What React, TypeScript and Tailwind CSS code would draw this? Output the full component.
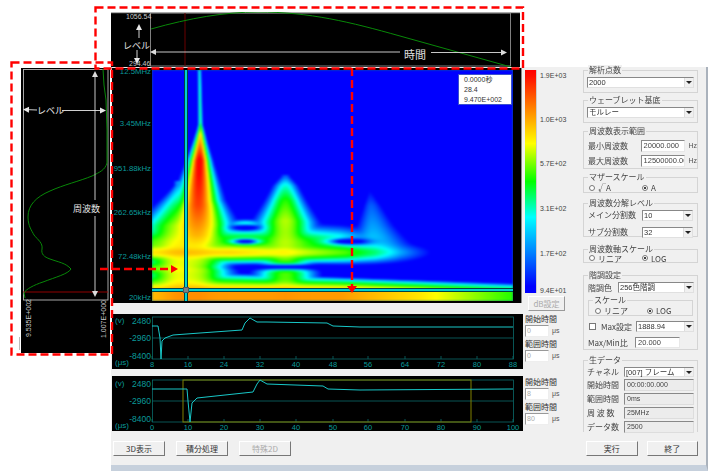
import React, { useEffect, useRef } from "react";

type P = [number, number];
const tb = (t: number, pts: P[]) => {
  if (t <= pts[0][0]) return pts[0][1];
  for (let i = 1; i < pts.length; i++) {
    if (t <= pts[i][0]) {
      const [a, b] = pts[i - 1];
      const [c, d] = pts[i];
      return b + ((d - b) * (t - a)) / (c - a);
    }
  }
  return pts[pts.length - 1][1];
};

const field = (x: number, y: number) => {
  const g = (d: number, s: number) => Math.exp(-(d * d) / (s * s));
  const parts: number[] = [];
  parts.push(
    tb(y, [[70, 0.36], [122, 0.42], [135, 0.72], [160, 1.04], [205, 0.92], [235, 0.76], [250, 0.6]]) *
      g(x - tb(y, [[70, 199], [130, 200], [225, 197]]), tb(y, [[70, 2], [125, 2.5], [140, 5.5], [165, 11], [200, 20], [225, 32], [240, 34]]))
  );
  if (y > 180) {
    parts.push(tb(y, [[185, 0.25], [205, 0.45], [225, 0.6], [245, 0.65]]) * g(x - 178, tb(y, [[185, 6], [225, 38]])));
  }
  if (y > 174) {
    parts.push(
      tb(y, [[176, 0.2], [185, 0.36], [200, 0.52], [220, 0.62], [235, 0.6], [250, 0.55]]) *
        g(x - 285, tb(y, [[176, 7], [185, 13], [200, 18], [222, 28], [240, 30]]))
    );
  }
  if (y > 186 && y < 268) {
    const cx = tb(y, [[187, 369], [262, 375]]);
    const s = tb(y, [[187, 3], [225, 18], [262, 38]]) * (x > cx ? 1.4 : 1);
    parts.push(tb(y, [[187, 0.1], [205, 0.2], [230, 0.27], [252, 0.33], [262, 0.15], [268, 0]]) * g(x - cx, s));
  }
  parts.push(tb(x, [[152, 0.7], [230, 0.72], [300, 0.64], [345, 0.55], [375, 0.42], [400, 0.25], [430, 0.12], [450, 0]]) * g(y - 252, 11));
  parts.push(tb(x, [[152, 0.55], [300, 0.55], [340, 0.42], [380, 0.18], [410, 0]]) * g(y - 243, 17));
  parts.push(tb(x, [[152, 0.56], [205, 0.5], [225, 0.25], [240, 0]]) * g(y - 268, 9));
  parts.push(0.42 * g(x - 245, 20) * g(y - 224, 5));
  const top = 270 + ((x - 152) / 361) * 13;
  if (y > top) {
    const t = Math.min(1, (y - top) / (290 - top));
    const vm = tb(x, [[152, 0.76], [200, 0.8], [340, 0.8], [420, 0.7], [513, 0.52]]);
    parts.push(0.1 + (vm - 0.1) * Math.pow(t, 0.7));
  }
  let sum = 0;
  for (const p of parts) sum += Math.pow(p, 7);
  let v = Math.pow(sum, 1 / 7);
  const hole = (hx: number, hy: number, wx: number, wy: number, d: number) => {
    v *= 1 - d * g(x - hx, wx) * g(y - hy, wy);
  };
  hole(245, 227, 13, 3, 0.95);
  hole(245, 241, 14, 2.6, 0.95);
  hole(348, 241, 20, 3, 0.95);
  hole(285, 266.5, 50, 3, 0.9);
  return v;
};

const jet = (v: number): [number, number, number] => {
  const s: P[] = [[0.12, 0], [0.34, 0], [0.5, 0], [0.67, 255], [1, 255]];
  const c: P[] = [[0.12, 0], [0.34, 255], [0.67, 255], [1, 0]];
  const b: P[] = [[0.12, 255], [0.34, 255], [0.5, 0], [1, 0]];
  return [tb(v, s), tb(v, c), tb(v, b)];
};

function Heat() {
  const ref = useRef<HTMLCanvasElement>(null);
  useEffect(() => {
    const cv = ref.current;
    if (!cv) return;
    const ctx = cv.getContext("2d");
    if (!ctx) return;
    const im = ctx.createImageData(cv.width, cv.height);
    for (let j = 0; j < cv.height; j++) {
      for (let i = 0; i < cv.width; i++) {
        const [r, g, b] = jet(field(152 + i, 70 + j));
        const k = (j * cv.width + i) * 4;
        im.data[k] = r;
        im.data[k + 1] = g;
        im.data[k + 2] = b;
        im.data[k + 3] = 255;
      }
    }
    ctx.putImageData(im, 0, 0);
  }, []);
  return (
    <div className="w-[361px] h-[231px] overflow-hidden bg-[#0a6a8a]">
      <canvas ref={ref} width={361} height={231} className="block w-[361px] h-[231px] bg-[#0000ff] blur-[1px]" />
    </div>
  );
}

const LATIN = "'Liberation Sans', 'Noto Sans CJK JP', sans-serif";
const JP = "'Noto Sans CJK JP', sans-serif";
const TEAL = "#0a9a9a";

function Arrow({ x1, y1, x2, y2, color = "#e8e8e8" }: { x1: number; y1: number; x2: number; y2: number; color?: string }) {
  const a = Math.atan2(y2 - y1, x2 - x1);
  const L = 6;
  const W = 3;
  const bx = x2 - L * Math.cos(a);
  const by = y2 - L * Math.sin(a);
  const nx = -Math.sin(a) * W;
  const ny = Math.cos(a) * W;
  return (
    <g>
      <line x1={x1} y1={y1} x2={bx} y2={by} stroke={color} strokeWidth={0.9} />
      <polygon points={`${x2},${y2} ${bx + nx},${by + ny} ${bx - nx},${by - ny}`} fill={color} />
    </g>
  );
}

function TopPanel() {
  return (
    <div className="w-[409px] h-[55px] bg-black">
      <svg viewBox="111 12 409 55" className="block w-[409px] h-[55px]">
        <rect x="111" y="12" width="409" height="1.2" fill="#b0b0b0" />
        <rect x="150.5" y="13" width="360" height="53" fill="none" stroke="#a0a0a0" strokeWidth="0.8" />
        <line x1="185" y1="13" x2="185" y2="66" stroke="#6a0000" strokeWidth="1" />
        <path d="M151 29 C190 18 225 12 258 12 C310 12 350 22 400 36 L511 67" fill="none" stroke="#088808" strokeWidth="1" />
        <text x="126" y="18.5" fontSize="7" fill="#c8c8c8" fontFamily={LATIN}>1056.54</text>
        <text x="129" y="65.5" fontSize="7" fill="#c8c8c8" fontFamily={LATIN}>294.46</text>
        <text x="123" y="49" fontSize="9" fill="#e0e0e0" fontFamily={JP}>レベル</text>
        <Arrow x1={139} y1={38} x2={139} y2={24} />
        <Arrow x1={137} y1={50} x2={137} y2={64} />
        <Arrow x1={400} y1={52} x2={150} y2={52} color="#dcdcdc" />
        <Arrow x1={431} y1={52.5} x2={507} y2={52.5} color="#dcdcdc" />
        <text x="404" y="59" fontSize="11" fill="#e0e0e0" fontFamily={JP}>時間</text>
      </svg>
    </div>
  );
}

function LeftPanel() {
  return (
    <div className="w-[91px] h-[285px] bg-black border-r-2 border-white">
      <svg viewBox="21 68 89 285" className="block w-[89px] h-[285px]">
        <rect x="23.5" y="69.5" width="84.5" height="230.5" fill="none" stroke="#b8b8b8" strokeWidth="0.9" />
        <line x1="23" y1="292" x2="108" y2="292" stroke="#a00000" strokeWidth="0.9" />
        <path
          d="M103 69 L104 85 L106 100 L107 130 L107 163 C105 170 100 172 92 176 C80 181 63 185 50 191 C36 197 28 205 28 217 C28 226 32 231 34 235 C38 240 43 243 42 249 C41 254 44 257 50 259 C58 262 66 263 71 269 C68 274 56 277 43 282 C34 285 26 289 24 293 L25 298"
          fill="none"
          stroke="#088808"
          strokeWidth="1"
        />
        <Arrow x1={95} y1={200} x2={95} y2={71} color="#dcdcdc" />
        <Arrow x1={95} y1={216} x2={95} y2={297} color="#dcdcdc" />
        <rect x="70" y="200" width="33" height="16" fill="#000" />
        <text x="73" y="212" fontSize="9" fill="#e8e8e8" fontFamily={JP}>周波数</text>
        <Arrow x1={37} y1={110} x2={23} y2={109.5} />
        <Arrow x1={62} y1={110.5} x2={106} y2={110.5} />
        <text x="37" y="114" fontSize="9" fill="#e8e8e8" fontFamily={JP}>レベル</text>
        <text transform="translate(31 337) rotate(-90)" fontSize="7" fill="#c8c8c8" fontFamily={LATIN}>9.535E+002</text>
        <text transform="translate(106 338) rotate(-90)" fontSize="7" fill="#c8c8c8" fontFamily={LATIN}>1.007E+000</text>
      </svg>
    </div>
  );
}

function Spectrogram() {
  const labels: [string, number][] = [
    ["12.5MHz", 74],
    ["3.45MHz", 125.5],
    ["951.88kHz", 170.5],
    ["262.65kHz", 215],
    ["72.48kHz", 259],
    ["20kHz", 300],
  ];
  return (
    <div className="relative flex w-[410px] h-[235px] bg-black border-r border-[#888]">
      <svg viewBox="112 68 40 235" className="block w-[40px] h-[235px] shrink-0">
        {labels.map(([t, y]) => (
          <text key={t} x="151" y={y} textAnchor="end" fontSize="7.8" fill={TEAL} fontFamily={LATIN}>
            {t}
          </text>
        ))}
      </svg>
      <div className="relative w-[361px] h-[231px] mt-[2px] border-0">
        <Heat />
        <div className="absolute left-[32px] top-0 w-[4px] h-[231px] bg-[#00d0d0] border-x border-[#044]" />
        <div className="absolute left-0 top-[218px] w-[361px] h-[4px] bg-[#00d0d0] border-y border-[#044]" />
        <div className="absolute left-[31px] top-[217px] w-[6px] h-[6px] bg-[#808080] border border-[#555]" />
        <div
          className="absolute left-[306px] top-[4px] w-[54px] h-[31px] bg-white border border-[#3a50d0] pl-[5px] text-[7px] leading-[10px] text-[#333]"
          style={{ fontFamily: LATIN }}
        >
          <div>0.0000秒</div>
          <div>28.4</div>
          <div>9.470E+002</div>
        </div>
      </div>
    </div>
  );
}

function ColorBar() {
  const ticks: [string, string][] = [
    ["1.9E+03", "mt-0"],
    ["1.0E+03", "mt-[34px]"],
    ["5.7E+02", "mt-[34px]"],
    ["3.1E+02", "mt-[35px]"],
    ["1.7E+02", "mt-[35px]"],
    ["9.4E+01", "mt-[27px]"],
  ];
  return (
    <div className="flex flex-col w-[47px] ml-[3px]">
      <div className="flex h-[223px] mt-[2px]">
        <div className="w-[12px] h-[223px] border-r border-[#ccc] bg-[linear-gradient(to_bottom,#ff0000_0%,#ff1000_3%,#ff8000_17%,#ffff00_33%,#00ff00_50%,#00ffff_66%,#0080ff_82%,#0000ff_97%)]" />
        <div className="ml-[3px] pt-[1px] flex flex-col text-[7px] leading-[10px] text-[#444]" style={{ fontFamily: LATIN }}>
          {ticks.map(([t, m]) => (
            <div key={t} className={m}>{t}</div>
          ))}
        </div>
      </div>
      <button className="mt-[3px] ml-[3px] w-[37px] h-[15px] shrink-0 bg-[#f0f0f0] border border-t-white border-l-white border-r-[#999] border-b-[#999] text-[8px] leading-[12px] text-[#aaa]" style={{ fontFamily: JP }}>
        dB設定
      </button>
    </div>
  );
}

function Wave({ ticks, pts, mid, box, rect }: { ticks: [string, number][]; pts: string; mid: number; box: [number, number]; rect?: boolean }) {
  const y0 = box[0] - 3 - (rect ? 1 : 0);
  return (
    <div className="w-[411px] h-[55px] bg-black">
      <svg viewBox={`112 ${y0} 411 55`} className="block w-[411px] h-[55px]">
        <rect x="152.5" y={box[0]} width="361" height={box[1] - box[0]} fill="none" stroke="#0a6a6a" strokeWidth="0.8" />
        <line x1="152" y1={mid} x2="513" y2={mid} stroke="#0a6a6a" strokeWidth="0.8" />
        {ticks.map(([t, x]) => (
          <g key={t}>
            <line x1={x} y1={box[1] - 3} x2={x} y2={box[1]} stroke="#0a6a6a" strokeWidth="0.8" />
            <text x={x} y={box[1] + 8} textAnchor="middle" fontSize="7.5" fill={TEAL} fontFamily={LATIN}>{t}</text>
          </g>
        ))}
        <text x="115" y={box[0] + 6} fontSize="8" fill={TEAL} fontFamily={LATIN}>(v)</text>
        <text x="115" y={box[1] + 6} fontSize="8" fill={TEAL} fontFamily={LATIN}>(μs)</text>
        <text x="151" y={box[0] + 7} textAnchor="end" fontSize="8.5" fill={TEAL} fontFamily={LATIN}>2480</text>
        <text x="151" y={mid + 3} textAnchor="end" fontSize="8.5" fill={TEAL} fontFamily={LATIN}>-2960</text>
        <text x="151" y={box[1] - 0.5} textAnchor="end" fontSize="8.5" fill={TEAL} fontFamily={LATIN}>-8400</text>
        {rect && <rect x="183" y={box[0]} width="288" height={box[1] - box[0]} fill="none" stroke="#808000" strokeWidth="1" />}
        <polyline points={pts} fill="none" stroke="#18c8c8" strokeWidth="1" />
      </svg>
    </div>
  );
}

function SmallInput({ v }: { v: string }) {
  return (
    <div className="w-[24px] h-[12px] bg-white border border-t-[#999] border-l-[#999] border-r-[#eee] border-b-[#eee] pl-[1px] text-[7px] leading-[10px] text-[#aaa]" style={{ fontFamily: LATIN }}>
      {v}
    </div>
  );
}

function Side({ a, b, cls = "" }: { a: string; b: string; cls?: string }) {
  const Row = ({ t, v }: { t: string; v: string }) => (
    <div>
      <div className="text-[8px] leading-[10px] text-[#333]" style={{ fontFamily: JP }}>{t}</div>
      <div className="flex items-center mt-[1px]">
        <SmallInput v={v} />
        <span className="ml-[3px] text-[7px] text-[#555]" style={{ fontFamily: LATIN }}>μs</span>
      </div>
    </div>
  );
  return (
    <div className={`ml-[2px] flex flex-col gap-[2px] w-[44px] ${cls}`}>
      <Row t="開始時間" v={a} />
      <Row t="範囲時間" v={b} />
    </div>
  );
}

function Btn({ t, cls, off }: { t: string; cls: string; off?: boolean }) {
  return (
    <button
      className={`h-[15px] bg-[#f0f0f0] border border-t-white border-l-white border-r-[#777] border-b-[#777] text-[8px] leading-[12px] ${off ? "text-[#aaa]" : "text-[#333]"} ${cls}`}
      style={{ fontFamily: JP }}
    >
      {t}
    </button>
  );
}

function Group({ title, cls, children }: { title: string; cls: string; children?: React.ReactNode }) {
  return (
    <div className={`relative border border-[#d4d4d4] ${cls}`}>
      <span className="absolute left-[4px] top-[-6px] bg-[#f0f0f0] px-[1px] text-[8px] leading-[10px] text-[#444] whitespace-nowrap" style={{ fontFamily: JP }}>
        {title}
      </span>
      {children}
    </div>
  );
}

function Select({ v, cls }: { v: string; cls: string }) {
  return (
    <div className={`flex items-center justify-between bg-white border border-t-[#888] border-l-[#888] border-r-[#e0e0e0] border-b-[#e0e0e0] ${cls}`}>
      <span className="pl-[1px] text-[7.5px] leading-[9px] text-[#333] whitespace-nowrap overflow-hidden" style={{ fontFamily: LATIN }}>{v}</span>
      <span className="w-[9px] h-full bg-[#f0f0f0] flex items-center justify-center shrink-0 border-l border-[#ddd]">
        <span className="w-0 h-0 border-x-[3px] border-x-transparent border-t-[3px] border-t-[#222]" />
      </span>
    </div>
  );
}

function Field({ v, cls }: { v: string; cls: string }) {
  return (
    <div className={`bg-white border border-t-[#888] border-l-[#888] border-r-[#e8e8e8] border-b-[#e8e8e8] pl-[2px] text-[7.5px] leading-[10px] text-[#444] overflow-hidden whitespace-nowrap ${cls}`} style={{ fontFamily: LATIN }}>
      {v}
    </div>
  );
}

function Radio({ on, t, cls }: { on?: boolean; t: string; cls: string }) {
  return (
    <div className={`flex items-center gap-[3px] ${cls}`}>
      <span className="w-[6px] h-[6px] rounded-full border border-[#777] bg-white flex items-center justify-center">
        {on && <span className="w-[2px] h-[2px] rounded-full bg-black" />}
      </span>
      <span className="text-[8px] leading-[9px] text-[#444] whitespace-nowrap" style={{ fontFamily: JP }}>{t}</span>
    </div>
  );
}

function Lab({ t, cls = "" }: { t: string; cls?: string }) {
  return <span className={`text-[8px] leading-[10px] text-[#444] whitespace-nowrap ${cls}`} style={{ fontFamily: JP }}>{t}</span>;
}

function Controls() {
  return (
    <div className="w-[115px] ml-[1px] pt-[3px] flex flex-col">
      <Group title="解析点数" cls="h-[23px] pt-[6px] px-[3px]">
        <Select v="2000" cls="w-[107px] h-[11px]" />
      </Group>
      <Group title="ウェーブレット基底" cls="h-[23px] mt-[7px] pt-[6px] px-[3px]">
        <Select v="モルレー" cls="w-[107px] h-[11px]" />
      </Group>
      <Group title="周波数表示範囲" cls="h-[38px] mt-[8px] pt-[8px] pl-[4px] flex flex-col gap-[3px]">
        <div className="flex items-center h-[12px]">
          <Lab t="最小周波数" cls="w-[54px]" />
          <Field v="20000.000" cls="w-[46px] h-[12px]" />
          <span className="ml-[3px] text-[7px] text-[#555]" style={{ fontFamily: LATIN }}>Hz</span>
        </div>
        <div className="flex items-center h-[12px]">
          <Lab t="最大周波数" cls="w-[54px]" />
          <Field v="12500000.00" cls="w-[46px] h-[12px]" />
          <span className="ml-[3px] text-[7px] text-[#555]" style={{ fontFamily: LATIN }}>Hz</span>
        </div>
      </Group>
      <Group title="マザースケール" cls="h-[16px] mt-[8px] pt-[5px] pl-[5px] flex">
        <Radio t="√A" cls="w-[53px]" />
        <Radio on t="A" cls="" />
      </Group>
      <Group title="周波数分解レベル" cls="h-[34px] mt-[10px] pt-[6px] pl-[4px] flex flex-col gap-[7px]">
        <div className="flex items-center h-[10px]">
          <Lab t="メイン分割数" cls="w-[54px]" />
          <Select v="10" cls="w-[51px] h-[11px]" />
        </div>
        <div className="flex items-center h-[10px]">
          <Lab t="サブ分割数" cls="w-[54px]" />
          <Select v="32" cls="w-[51px] h-[11px]" />
        </div>
      </Group>
      <Group title="周波数軸スケール" cls="h-[14px] mt-[12px] pt-[4px] pl-[5px] flex">
        <Radio t="リニア" cls="w-[53px]" />
        <Radio on t="LOG" cls="" />
      </Group>
      <Group title="階調設定" cls="h-[75px] mt-[12px] pt-[6px] pl-[4px] flex flex-col">
        <div className="flex items-center h-[11px]">
          <Lab t="階調色" cls="w-[30px]" />
          <Select v="256色階調" cls="w-[76px] h-[11px]" />
        </div>
        <Group title="スケール" cls="w-[105px] h-[16px] mt-[7px] pt-[5px] pl-[6px] flex">
          <Radio t="リニア" cls="w-[52px]" />
          <Radio on t="LOG" cls="" />
        </Group>
        <div className="flex items-center h-[11px] mt-[5px]">
          <span className="w-[7px] h-[7px] bg-white border border-[#777] ml-[1px]" />
          <Lab t="Max設定" cls="ml-[5px] w-[35px] text-[7.5px]" />
          <Select v="1888.94" cls="w-[58px] h-[11px]" />
        </div>
        <div className="flex items-center h-[11px] mt-[5px]">
          <Lab t="Max/Min比" cls="w-[47px] text-[7.5px]" />
          <Field v="20.000" cls="w-[45px] h-[11px]" />
        </div>
      </Group>
      <Group title="生データ" cls="h-[72px] mt-[10px] pt-[6px] pl-[3px] flex flex-col gap-[2px] border-b-0">
        <div className="flex items-center h-[10px]">
          <Lab t="チャネル" cls="w-[37px]" />
          <Select v="[007] フレーム" cls="w-[70px] h-[10px]" />
        </div>
        {[
          ["開始時間", "00:00:00.000"],
          ["範囲時間", "0ms"],
          ["周 波 数", "25MHz"],
          ["データ数", "2500"],
        ].map(([a, b]) => (
          <div key={a} className="flex items-center h-[12px]">
            <Lab t={a} cls="w-[37px]" />
            <div className="w-[70px] h-[12px] bg-[#ececec] border border-t-[#888] border-l-[#888] border-r-[#ddd] border-b-[#ddd] pl-[2px] text-[7px] leading-[10px] text-[#444]" style={{ fontFamily: LATIN }}>
              {b}
            </div>
          </div>
        ))}
      </Group>
      <div className="flex mt-[9px] ml-[3px] gap-[9px]">
        <Btn t="実行" cls="w-[52px]" />
        <Btn t="終了" cls="w-[52px]" />
      </div>
    </div>
  );
}

const t1: [string, number][] = [["8", 152], ["16", 188], ["24", 224], ["32", 260], ["40", 296], ["48", 333], ["56", 368], ["64", 405], ["72", 441], ["80", 477], ["88", 513]];
const t2: [string, number][] = [["0", 152], ["10", 188], ["20", 224], ["30", 260], ["40", 296], ["50", 333], ["60", 368], ["70", 405], ["80", 441], ["90", 477], ["100", 513]];
const w1 = "152,326 158,326 160,338 161,359 162,341 165,338 173,335 200,333 242,330 245,323 250,318 257,322 267,322 327,323 333,326 360,327 513,327";
const w2 = "152,389 187,389 188,401 190,422 192,403 197,398 253,392 257,384 260,380 267,384 323,386 328,389 360,390 513,389";

export default function App() {
  return (
    <div className="relative flex w-[715px] h-[476px] bg-white overflow-hidden blur-[0.4px]">
      <div className="w-[111px] shrink-0 pt-[68px] pl-[21px]">
        <LeftPanel />
      </div>
      <div className="flex flex-col w-[597px] pt-[12px]">
        <TopPanel />
        <div className="flex w-[597px] h-[404px] bg-[#f0f0f0] border-r-2 border-b-[6px] border-r-[#aab2bc] border-b-[#c6d0dc]">
          <div className="flex flex-col w-[471px]">
            <div className="flex ml-[1px] mt-[1px] h-[235px]">
              <Spectrogram />
              <ColorBar />
            </div>
            <div className="flex ml-[1px] mt-[11px]">
              <Wave ticks={t1} pts={w1} mid={338} box={[317, 359]} />
              <Side a="0" b="0" />
            </div>
            <div className="flex ml-[1px] mt-[7px]">
              <Wave ticks={t2} pts={w2} mid={401} box={[380, 422]} rect />
              <Side a="8" b="80" cls="mt-[1px]" />
            </div>
            <div className="flex ml-[2px] mt-[10px] gap-[11px]">
              <Btn t="3D表示" cls="w-[52px]" />
              <Btn t="積分処理" cls="w-[52px]" />
              <Btn t="特殊2D" cls="w-[52px]" off />
            </div>
          </div>
          <Controls />
        </div>
      </div>
      <svg viewBox="0 0 715 476" className="absolute left-0 top-0 w-[715px] h-[476px] pointer-events-none">
        <line x1="19.5" y1="337" x2="19.5" y2="350" stroke="#aaa" strokeWidth="0.8" />
        <g fill="none" stroke="#ff0000" strokeWidth="2.4" strokeDasharray="8 4">
          <rect x="95.5" y="7.5" width="427.5" height="61" />
          <rect x="11.5" y="62.5" width="100.5" height="292" />
          <line x1="352" y1="68" x2="352" y2="286" />
          <line x1="100" y1="269" x2="171" y2="269" />
        </g>
        <polygon points="352,293 347,286 357,286" fill="#ff0000" />
        <polygon points="178,269 171,265 171,273" fill="#ff0000" />
      </svg>
    </div>
  );
}
